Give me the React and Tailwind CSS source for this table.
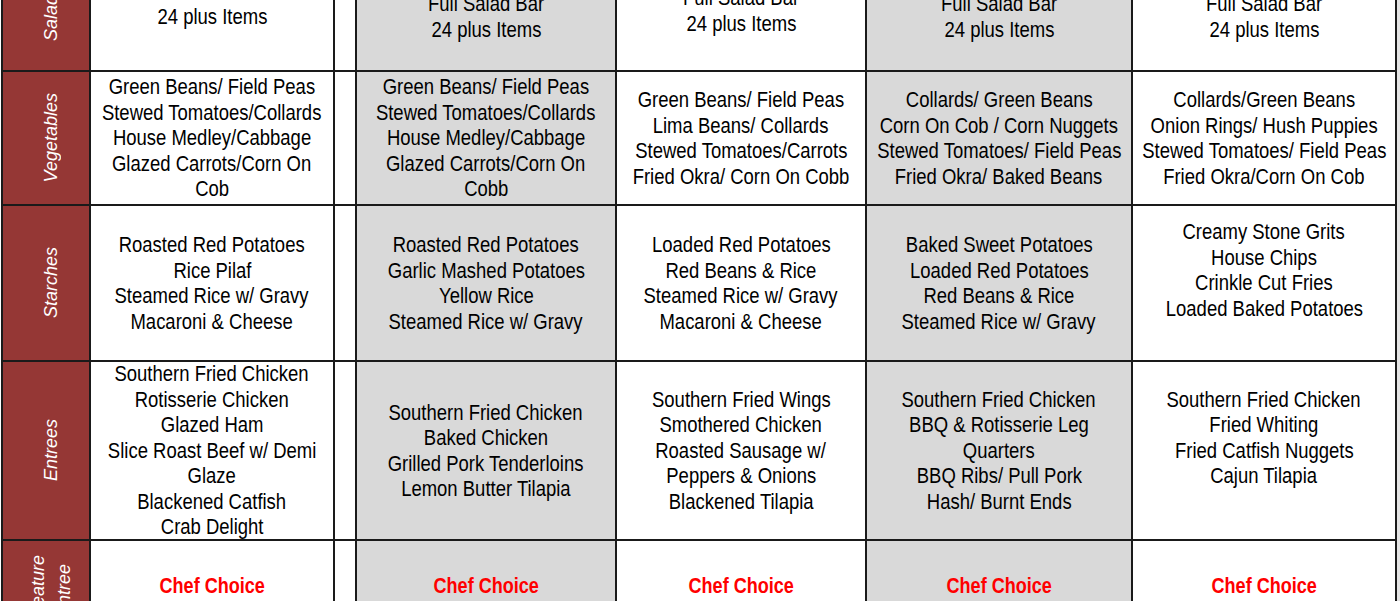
const rows = [
  {
    label: ["Salad"],
    height: "h-[104px]",
    cells: [
      { lines: ["Full Salad Bar", "24 plus Items"], pad: "pb-[41px]" },
      { lines: ["Full Salad Bar", "24 plus Items"], pad: "pb-[28px]" },
      { lines: ["Full Salad Bar", "24 plus Items"], pad: "pb-[34px]" },
      { lines: ["Full Salad Bar", "24 plus Items"], pad: "pb-[28px]" },
      { lines: ["Full Salad Bar", "24 plus Items"], pad: "pb-[28px]" },
    ],
    bottom: true,
  },
  {
    label: ["Vegetables"],
    height: "h-[132px]",
    cells: [
      { lines: ["Green Beans/ Field Peas", "Stewed Tomatoes/Collards", "House Medley/Cabbage", "Glazed Carrots/Corn On", "Cob"] },
      { lines: ["Green Beans/ Field Peas", "Stewed Tomatoes/Collards", "House Medley/Cabbage", "Glazed Carrots/Corn On", "Cobb"] },
      { lines: ["Green Beans/ Field Peas", "Lima Beans/ Collards", "Stewed Tomatoes/Carrots", "Fried Okra/ Corn On Cobb"] },
      { lines: ["Collards/ Green Beans", "Corn On Cob / Corn Nuggets", "Stewed Tomatoes/ Field Peas", "Fried Okra/ Baked Beans"] },
      { lines: ["Collards/Green Beans", "Onion Rings/ Hush Puppies", "Stewed Tomatoes/ Field Peas", "Fried Okra/Corn On Cob"] },
    ],
  },
  {
    label: ["Starches"],
    height: "h-[154px]",
    cells: [
      { lines: ["Roasted Red Potatoes", "Rice Pilaf", "Steamed Rice w/ Gravy", "Macaroni & Cheese"] },
      { lines: ["Roasted Red Potatoes", "Garlic Mashed Potatoes", "Yellow Rice", "Steamed Rice w/ Gravy"] },
      { lines: ["Loaded Red Potatoes", "Red Beans & Rice", "Steamed Rice w/ Gravy", "Macaroni & Cheese"] },
      { lines: ["Baked Sweet Potatoes", "Loaded Red Potatoes", "Red Beans & Rice", "Steamed Rice w/ Gravy"] },
      { lines: ["Creamy Stone Grits", "House Chips", "Crinkle Cut Fries", "Loaded Baked Potatoes", "\u00a0"] },
    ],
  },
  {
    label: ["Entrees"],
    height: "h-[177px]",
    cells: [
      { lines: ["Southern Fried Chicken", "Rotisserie Chicken", "Glazed Ham", "Slice Roast Beef w/ Demi", "Glaze", "Blackened Catfish", "Crab Delight"] },
      { lines: ["Southern Fried Chicken", "Baked Chicken", "Grilled Pork Tenderloins", "Lemon Butter Tilapia"] },
      { lines: ["Southern Fried Wings", "Smothered Chicken", "Roasted Sausage w/", "Peppers & Onions", "Blackened Tilapia"] },
      { lines: ["Southern Fried Chicken", "BBQ & Rotisserie Leg", "Quarters", "BBQ Ribs/ Pull Pork", "Hash/ Burnt Ends"] },
      { lines: ["Southern Fried Chicken", "Fried Whiting", "Fried Catfish Nuggets", "Cajun Tilapia", "\u00a0"] },
    ],
  },
  {
    label: ["Feature", "Entree"],
    height: "h-[90px]",
    chef: true,
    cells: [
      { lines: ["Chef Choice"] },
      { lines: ["Chef Choice"] },
      { lines: ["Chef Choice"] },
      { lines: ["Chef Choice"] },
      { lines: ["Chef Choice"] },
    ],
  },
];

const widths = ["w-[242px]", "w-[258px]", "w-[248px]", "w-[264px]", "w-[262px]"];

// Arial Narrow isn't installed: squeeze Liberation Sans to its width
function Cell({ cell, idx, row }) {
  const grey = idx === 1 || idx === 3;
  return (
    <div
      className={`${widths[idx]} ${grey ? "bg-[#d9d9d9]" : "bg-white"} flex flex-col items-center ${
        row.bottom ? "justify-end" : "justify-center"
      } ${cell.pad || ""} text-center leading-[25.5px] ${
        row.chef ? "text-[#ff0000] font-bold" : "text-black"
      }`}
    >
      {cell.lines.map((l, i) => (
        <div
          key={i}
          className={`whitespace-nowrap ${row.chef ? "scale-x-[0.82]" : "scale-x-[0.84]"}`}
        >
          {l}
        </div>
      ))}
    </div>
  );
}

export default function App() {
  return (
    <div className="w-[1400px] h-[601px] overflow-hidden bg-white flex items-start">
      <div className="-mt-[36px] ml-[1px] bg-[#1a1a1a] p-[2px] flex flex-col gap-[2px] text-[22px] font-['Liberation_Sans',Arial,sans-serif]">
        {rows.map((row, r) => (
          <div key={r} className={`flex gap-[2px] ${row.height}`}>
            <div className="w-[86px] bg-[#953735] flex items-center justify-center pl-[10px]">
              <div className="[writing-mode:vertical-rl] rotate-180 text-white italic text-[18px] leading-[26px] whitespace-nowrap">
                {row.label.map((l, i) => (
                  <div key={i}>{l}</div>
                ))}
              </div>
            </div>
            <Cell cell={row.cells[0]} idx={0} row={row} />
            <div className="w-[20px] bg-white" />
            {row.cells.slice(1).map((c, i) => (
              <Cell key={i} cell={c} idx={i + 1} row={row} />
            ))}
          </div>
        ))}
      </div>
      <div className="flex-1 self-stretch bg-[#e4e4e4]" />
    </div>
  );
}
